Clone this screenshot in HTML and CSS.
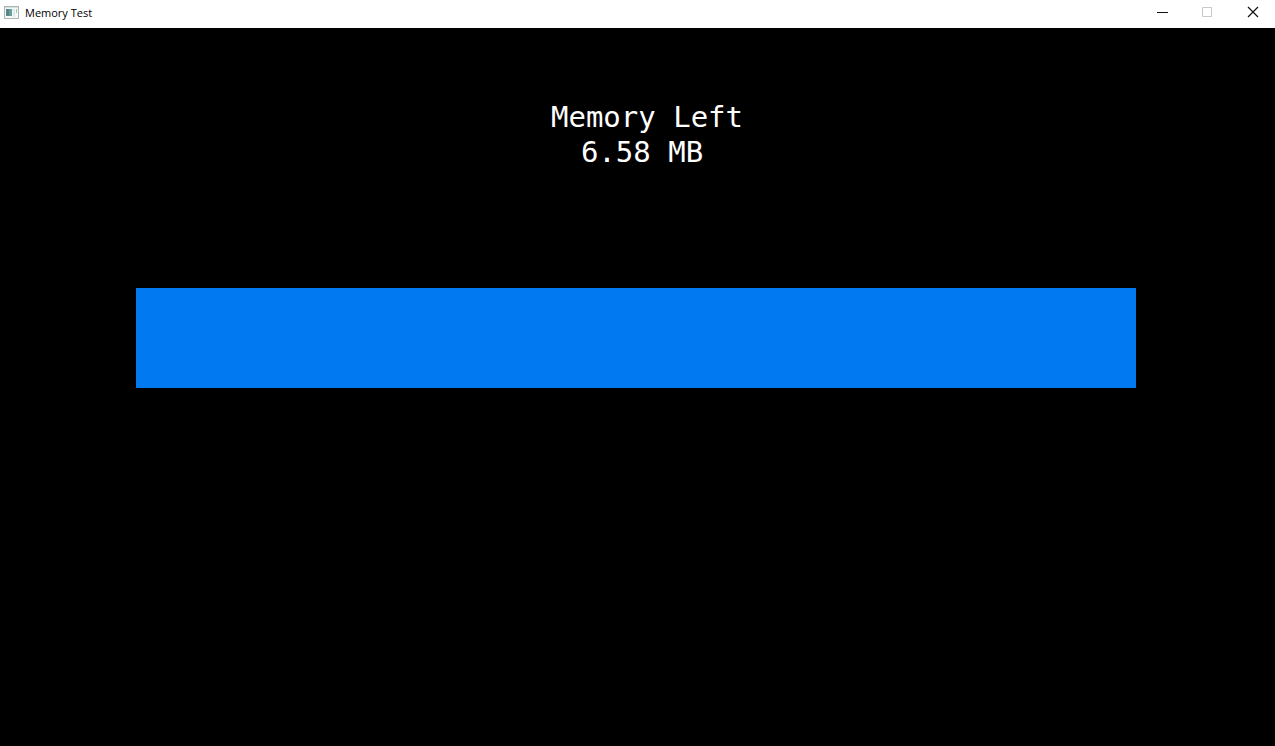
FILE: index.html
```html
<!DOCTYPE html>
<html lang="en">
<head>
<meta charset="utf-8">
<title>Memory Test</title>
<link rel="stylesheet" href="styles.css">
</head>
<body>
<div class="window">
  <header class="titlebar">
    <svg class="app-icon" width="15" height="13" viewBox="0 0 15 13" aria-hidden="true">
      <rect x="0.5" y="0.5" width="14" height="12" fill="#f4f8f8" stroke="#a9b7b7"/>
      <path d="M1 1.5h13" stroke="#d5e1e1"/>
      <rect x="2" y="3" width="6" height="7" fill="#6d9c9c"/>
      <rect x="2" y="3" width="3" height="7" fill="#54868a"/>
      <rect x="9" y="3" width="2" height="8" fill="#dcecea"/>
      <rect x="12" y="3" width="1" height="4" fill="#a4c2bc"/>
    </svg>
    <h1 class="title">Memory Test</h1>
    <div class="controls">
      <button class="control" type="button" aria-label="Minimize">
        <svg width="12" height="12" viewBox="0 0 12 12"><path d="M0 6.5h11" stroke="#111"/></svg>
      </button>
      <button class="control" type="button" aria-label="Maximize" disabled>
        <svg width="12" height="12" viewBox="0 0 12 12"><path d="M0.5 1.5h9v9h-9z" fill="none" stroke="#c8c8c8"/></svg>
      </button>
      <button class="control" type="button" aria-label="Close">
        <svg width="12" height="12" viewBox="0 0 12 12"><path d="M1 1l10 10M11 1L1 11" stroke="#111" stroke-width="1.2"/></svg>
      </button>
    </div>
  </header>
  <main class="stage">
    <div class="readout">
      <p class="label" id="memory-label">Memory Left</p>
      <p class="value">6.58 MB</p>
    </div>
    <div class="bar" role="img" aria-labelledby="memory-label"></div>
  </main>
</div>
</body>
</html>
```
FILE: styles.css
```css
body {
  margin: 0;
  background: #000;
}

.window {
  display: flex;
  flex-direction: column;
  min-height: 100vh;
}

.titlebar {
  display: flex;
  align-items: center;
  height: 28px;
  padding-left: 4px;
  background: #fff;
  box-sizing: border-box;
}

.app-icon {
  margin-bottom: 4px;
}

.title {
  margin: 0 0 2px 6px;
  font: 400 11px/16px "Open Sans", "Noto Sans", sans-serif;
  color: #000;
}

.controls {
  display: flex;
  margin-left: auto;
}

.control {
  display: flex;
  align-items: center;
  justify-content: center;
  width: 45px;
  height: 28px;
  padding: 0 0 4px;
  border: 0;
  background: transparent;
}

.stage {
  flex: 1;
  padding: 72px 139px 0 136px;
  background: #000;
}

.readout {
  padding-left: 22px;
  font: 400 29px/35px "DejaVu Sans Mono", "Liberation Mono", monospace;
  color: #fff;
  text-align: center;
}

.label,
.value {
  margin: 0;
}

.value {
  padding-right: 10px;
}

.bar {
  height: 100px;
  margin-top: 118px;
  background: #0079f1;
}
```
